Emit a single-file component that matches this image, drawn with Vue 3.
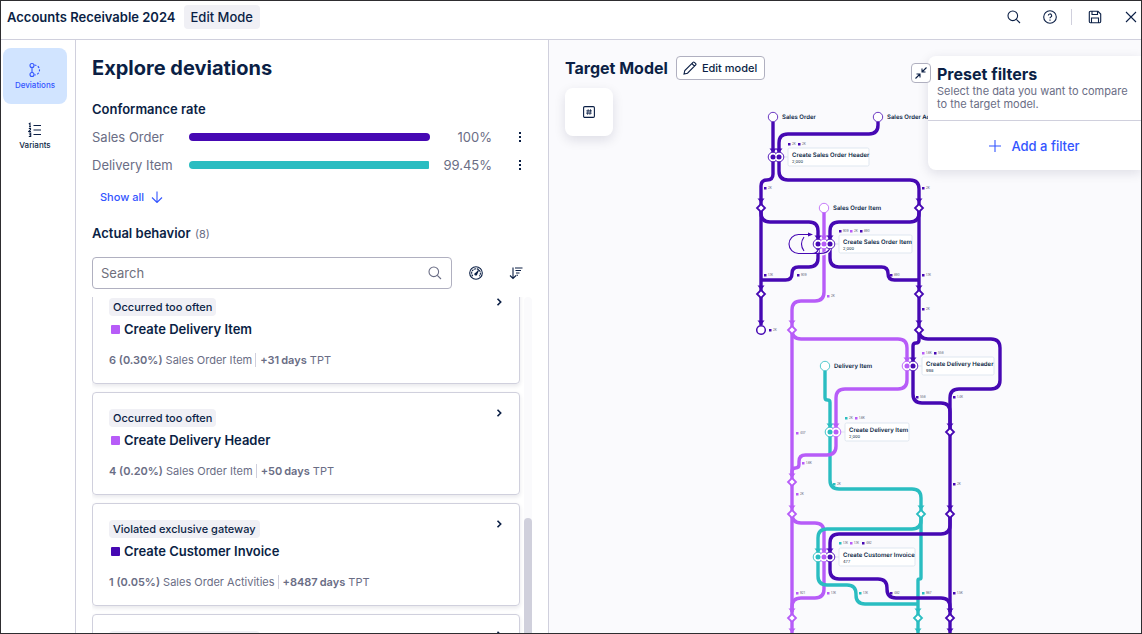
<script setup>
import { ref } from 'vue'

const DARK = '#4608b3'
const LIGHT = '#b75cf8'
const TEAL = '#2abdc1'

const query = ref('')

const rates = [
  { name: 'Sales Order', value: 100, label: '100%', color: DARK },
  { name: 'Delivery Item', value: 99.45, label: '99.45%', color: TEAL }
]

const deviations = [
  { kind: 'Occurred too often', title: 'Create Delivery Item', color: LIGHT, count: '6 (0.30%)', object: 'Sales Order Item', delta: '+31' },
  { kind: 'Occurred too often', title: 'Create Delivery Header', color: LIGHT, count: '4 (0.20%)', object: 'Sales Order Item', delta: '+50' },
  { kind: 'Violated exclusive gateway', title: 'Create Customer Invoice', color: DARK, count: '1 (0.05%)', object: 'Sales Order Activities', delta: '+8487' },
  { kind: 'Violated exclusive gateway', title: 'Clear Customer Invoice', color: DARK, count: '1 (0.05%)', object: 'Sales Order Activities', delta: '+8487' }
]

// Builds a path through the points with rounded corners.
function route(points, radius = 9) {
  let d = `M${points[0][0]} ${points[0][1]}`
  for (let i = 1; i < points.length - 1; i++) {
    const [px, py] = points[i - 1]
    const [x, y] = points[i]
    const [nx, ny] = points[i + 1]
    const before = Math.hypot(x - px, y - py)
    const after = Math.hypot(nx - x, ny - y)
    const r = Math.min(radius, before / (i === 1 ? 1 : 2), after / (i === points.length - 2 ? 1 : 2))
    const ax = x + ((px - x) / before) * r
    const ay = y + ((py - y) / before) * r
    const bx = x + ((nx - x) / after) * r
    const by = y + ((ny - y) / after) * r
    d += ` L${ax} ${ay} Q${x} ${y} ${bx} ${by}`
  }
  const end = points[points.length - 1]
  return `${d} L${end[0]} ${end[1]}`
}

const edges = [
  { c: DARK, p: [[773, 122], [773, 157]] },
  { c: DARK, p: [[878, 122], [878, 134], [779, 134], [779, 157]] },
  { c: DARK, p: [[773, 157], [773, 180], [761, 180], [761, 207]] },
  { c: DARK, p: [[779, 157], [779, 180], [919, 180], [919, 207]] },
  { c: DARK, p: [[761, 207], [761, 325]] },
  { c: DARK, p: [[761, 207], [761, 222], [818, 222], [818, 244]] },
  { c: DARK, p: [[919, 207], [919, 222], [830, 222], [830, 244]] },
  { c: DARK, p: [[919, 207], [919, 330]] },
  { c: DARK, p: [[818, 244], [818, 267], [792, 267], [792, 280], [761, 280]] },
  { c: DARK, p: [[830, 244], [830, 267], [888, 267], [888, 280], [919, 280]] },
  { c: LIGHT, p: [[824, 212], [824, 301], [792, 301], [792, 330]] },
  { c: TEAL, p: [[825, 371], [825, 400], [830, 400], [830, 432]] },
  { c: TEAL, p: [[830, 432], [830, 489], [921, 489], [921, 514]] },
  { c: LIGHT, p: [[792, 330], [792, 634]] },
  { c: LIGHT, p: [[792, 330], [792, 339], [907, 339], [907, 366]] },
  { c: LIGHT, p: [[907, 366], [907, 389], [836, 389], [836, 432]] },
  { c: LIGHT, p: [[836, 432], [836, 455], [799, 455], [799, 468], [792, 468], [792, 476]] },
  { c: DARK, p: [[919, 330], [919, 339], [1000, 339], [1000, 389], [950, 389], [950, 432]] },
  { c: DARK, p: [[919, 330], [919, 343], [913, 343], [913, 366]] },
  { c: DARK, p: [[913, 366], [913, 403], [950, 403], [950, 432]] },
  { c: LIGHT, p: [[792, 514], [792, 523], [824, 523], [824, 557]] },
  { c: LIGHT, p: [[824, 557], [824, 598], [792, 598], [792, 612]] },
  { c: TEAL, p: [[921, 514], [921, 529], [818, 529], [818, 557]] },
  { c: TEAL, p: [[921, 514], [921, 579], [918, 579], [918, 634]] },
  { c: TEAL, p: [[818, 557], [818, 585], [856, 585], [856, 604], [918, 604]] },
  { c: DARK, p: [[950, 432], [950, 634]] },
  { c: DARK, p: [[950, 514], [950, 534], [830, 534], [830, 557]] },
  { c: DARK, p: [[830, 557], [830, 579], [887, 579], [887, 598], [950, 598], [950, 612]] }
]

const arrows = [
  [773, 151, DARK], [779, 151, DARK], [761, 201, DARK], [919, 201, DARK],
  [818, 238, DARK], [824, 238, LIGHT], [830, 238, DARK],
  [761, 288, DARK], [919, 288, DARK], [761, 323, DARK], [919, 323, DARK], [792, 323, LIGHT],
  [907, 360, LIGHT], [913, 360, DARK], [830, 426, TEAL], [836, 426, LIGHT], [950, 426, DARK],
  [792, 476, LIGHT], [792, 508, LIGHT], [921, 508, TEAL], [950, 508, DARK],
  [818, 551, TEAL], [824, 551, LIGHT], [830, 551, DARK],
  [792, 611, LIGHT], [918, 611, TEAL], [950, 611, DARK],
  [792, 631, LIGHT], [918, 631, TEAL], [950, 631, DARK]
]

const gateways = [
  [761, 208, DARK], [919, 208, DARK], [761, 294, DARK], [919, 294, DARK], [919, 330, DARK],
  [792, 330, LIGHT], [950, 432, DARK], [792, 482, LIGHT], [792, 514, LIGHT], [921, 514, TEAL],
  [950, 514, DARK], [792, 618, LIGHT], [918, 618, TEAL], [950, 618, DARK]
]

const starts = [
  { x: 773, y: 117, c: DARK, label: 'Sales Order' },
  { x: 878, y: 117, c: DARK, label: 'Sales Order Activities' },
  { x: 824, y: 208, c: LIGHT, label: 'Sales Order Item' },
  { x: 825, y: 366, c: TEAL, label: 'Delivery Item' }
]

const activities = [
  { y: 157, dots: [[773, DARK], [779, DARK]], x: 788, w: 81, name: 'Create Sales Order Header', count: '2,000' },
  { y: 244, dots: [[818, DARK], [824, LIGHT], [830, DARK]], x: 839, w: 73, name: 'Create Sales Order Item', count: '2,000' },
  { y: 366, dots: [[907, LIGHT], [913, DARK]], x: 922, w: 72, name: 'Create Delivery Header', count: '998' },
  { y: 432, dots: [[830, TEAL], [836, LIGHT]], x: 845, w: 64, name: 'Create Delivery Item', count: '2,000' },
  { y: 557, dots: [[818, TEAL], [824, LIGHT], [830, DARK]], x: 839, w: 76, name: 'Create Customer Invoice', count: '477' }
]

const counts = [
  [789, 144, DARK, '2K'], [799, 144, DARK, '2K'], [765, 188, DARK, '2K'], [923, 188, DARK, '2K'],
  [840, 231, DARK, '909'], [851, 231, LIGHT, '2K'], [861, 231, DARK, '890'],
  [765, 275, DARK, '1.1K'], [798, 275, DARK, '909'], [891, 275, DARK, '890'], [923, 275, DARK, '1.1K'],
  [828, 296, LIGHT, '2K'], [770, 330, DARK, '2K'], [923, 309, DARK, '2K'],
  [923, 353, LIGHT, '1.6K'], [935, 353, DARK, '558'], [917, 397, DARK, '558'], [954, 397, DARK, '1.4K'],
  [846, 418, TEAL, '2K'], [856, 418, LIGHT, '1.6K'], [797, 433, LIGHT, '407'], [803, 463, LIGHT, '1.6K'],
  [834, 484, TEAL, '2K'], [797, 494, LIGHT, '2K'], [954, 484, DARK, '2K'],
  [840, 543, TEAL, '1.1K'], [851, 543, LIGHT, '1.1K'], [863, 543, DARK, '482'],
  [797, 593, LIGHT, '921'], [828, 593, LIGHT, '1.1K'], [860, 593, TEAL, '1.1K'],
  [891, 593, DARK, '482'], [923, 593, TEAL, '967'], [954, 593, DARK, '1.5K']
]
</script>

<template>
  <div class="app">
    <header class="topbar">
      <h1 class="topbar-title">Accounts Receivable 2024</h1>
      <span class="mode">Edit Mode</span>
      <div class="topbar-actions">
        <button class="icon-btn" aria-label="Search">
          <svg width="14" height="14" viewBox="0 0 14 14"><circle cx="5.8" cy="5.8" r="4.8" /><path d="M9.3 9.3 13 13" /></svg>
        </button>
        <button class="icon-btn" aria-label="Help">
          <svg width="14" height="14" viewBox="0 0 14 14"><circle cx="7" cy="7" r="6.3" /><path d="M5.3 5.6a1.7 1.7 0 1 1 2.5 1.5c-.6.3-.8.6-.8 1.2" /><path d="M7 9.6v1.2" /></svg>
        </button>
        <span class="divider"></span>
        <button class="icon-btn" aria-label="Save">
          <svg width="14" height="14" viewBox="0 0 14 14"><path d="M1.3 2.4v9.2q0 1.1 1.1 1.1h9.2q1.1 0 1.1-1.1V4L10 1.300H2.400q-1.100 0-1.100 1.100zM4 1.500v3h5.500v-3M3.500 12.500V8h7v4.500" /></svg>
        </button>
        <button class="icon-btn" aria-label="Close">
          <svg width="14" height="14" viewBox="0 0 14 14"><path d="m2 2 10 10M12 2 2 12" /></svg>
        </button>
      </div>
    </header>

    <div class="body">
      <nav class="rail">
        <button class="rail-item active">
          <svg width="14" height="16" viewBox="0 0 14 16"><circle cx="4" cy="3.500" r="2" /><circle cx="4" cy="12.500" r="2" /><path d="M4 5.500v5" /><path d="M6.500 3a5 5 0 0 1 0 10" stroke-dasharray="2 1.500" /></svg>
          Deviations
        </button>
        <button class="rail-item">
          <svg width="14" height="16" viewBox="0 0 14 16"><path d="M5.500 3.500H13M5.500 8H13M5.500 12.500H13" /><path d="M.8 2 2 1.300v3.500M1 4.800h2M.8 6.500H2.500v1L.8 9.500H3M.8 11H2.700v3.500H.8M1.200 12.700h1.500" /></svg>
          Variants
        </button>
      </nav>

      <section class="explore">
        <h2 class="explore-title">Explore deviations</h2>
        <h3 class="sub-title">Conformance rate</h3>
        <div class="rates">
          <div v-for="r in rates" :key="r.name" class="rate">
            <span class="rate-name">{{ r.name }}</span>
            <div class="rate-track">
              <div class="rate-fill" :class="{ partial: r.value < 100 }" :style="{ width: r.value + '%', background: r.color }"></div>
            </div>
            <span class="rate-value">{{ r.label }}</span>
            <button class="icon-btn" :aria-label="r.name + ' options'">
              <svg class="solid" width="12" height="12" viewBox="0 0 12 12"><path d="M5 1h2v2H5zM5 5h2v2H5zM5 9h2v2H5z" /></svg>
            </button>
          </div>
        </div>
        <button class="show-all">
          Show all
          <svg width="12" height="12" viewBox="0 0 12 12"><path d="M6 .5v11M1 6.500l5 5 5-5" /></svg>
        </button>
        <h3 class="sub-title behavior">Actual behavior <span class="total">(8)</span></h3>
        <div class="tools">
          <label class="search">
            <input v-model="query" type="text" placeholder="Search" aria-label="Search" />
            <svg width="14" height="14" viewBox="0 0 14 14"><circle cx="5.800" cy="5.800" r="4.800" /><path d="M9.300 9.300 13 13" /></svg>
          </label>
          <button class="icon-btn" aria-label="Effect">
            <svg width="14" height="14" viewBox="0 0 14 14"><circle cx="7" cy="7" r="6.300" /><path d="M3.800 10.200a4.400 4.400 0 1 1 6.400 0" stroke-dasharray="2 .7" /><path d="M6.300 8.200 9.500 4.300 7.500 8.600z" /><circle cx="6.800" cy="8.200" r=".8" /></svg>
          </button>
          <button class="icon-btn" aria-label="Sort">
            <svg width="14" height="14" viewBox="0 0 14 14"><path d="M4 1.500v11M1 9.500l3 3 3-3M6 2h7.500M6.500 4.500H12M7 7h3.500M7.500 9.200H9" /></svg>
          </button>
        </div>
        <div class="list-area">
          <div class="list">
            <article v-for="d in deviations" :key="d.title" class="card">
              <div class="card-text">
                <span class="tag">{{ d.kind }}</span>
                <h4 class="card-title"><i class="swatch" :style="{ background: d.color }"></i>{{ d.title }}</h4>
                <div class="meta">
                  <span><b>{{ d.count }}</b> {{ d.object }}</span>
                  <span class="meta-effect"><b class="delta"><span>{{ d.delta }}</span><span>days</span></b> TPT</span>
                </div>
              </div>
              <button class="open" :aria-label="'Open ' + d.title">
                <svg width="8" height="8" viewBox="0 0 8 8"><path d="M2.500.8 5.700 4 2.500 7.200" /></svg>
              </button>
            </article>
          </div>
          <div class="scroll-track"><div class="scroll-thumb"></div></div>
        </div>
      </section>

      <main class="model">
        <svg class="diagram" width="593" height="594" viewBox="549 40 593 594" role="img" aria-label="Target model">
          <path v-for="(e, i) in edges" :key="'e' + i" class="edge" :d="route(e.p)" :stroke="e.c" />
          <path v-for="(a, i) in arrows" :key="'a' + i" :d="`M${a[0] - 3.5} ${a[1] - 2.500}h7l-3.500 4.500z`" :fill="a[2]" />
          <g class="loop">
            <path class="halo" d="M818 250q-1 3.500-6 3.500H798.500a9.500 9.500 0 0 1 0-19H811M830 248q-2 6-10 6" />
            <path d="M818 250q-1 3.500-6 3.500H798.500a9.500 9.500 0 0 1 0-19H811M804 251q-5-7 0-14M830 248q-2 5.500-10 5.500H812" />
            <path class="loop-head" d="M808 232.500l5 2-5 2z" />
          </g>
          <path v-for="(g, i) in gateways" :key="'g' + i" class="gateway" :d="`M${g[0]} ${g[1] - 4}l4 4-4 4-4-4z`" :stroke="g[2]" />
          <g v-for="s in starts" :key="s.label">
            <circle class="start" :cx="s.x" :cy="s.y" r="4.700" :stroke="s.c" />
            <text class="node-name" :x="s.x + 9" :y="s.y + 2">{{ s.label }}</text>
          </g>
          <circle class="end" cx="761" cy="330" r="4.300" />
          <g v-for="a in activities" :key="a.name">
            <path class="link" :d="`M${a.dots[a.dots.length - 1][0]} ${a.y}H${a.x}`" />
            <circle v-for="(d, i) in a.dots" :key="'r' + i" class="ring" :cx="d[0]" :cy="a.y" r="4.800" :stroke="d[1]" />
            <circle v-for="(d, i) in a.dots" :key="'c' + i" class="core" :cx="d[0]" :cy="a.y" r="3.600" />
            <circle v-for="(d, i) in a.dots" :key="'d' + i" :cx="d[0]" :cy="a.y" r="2.500" :fill="d[1]" />
            <rect class="node-card" :x="a.x" :y="a.y - 9" :width="a.w" height="18" rx="1.500" />
            <text class="node-name" :x="a.x + 4" :y="a.y">{{ a.name }}</text>
            <text class="node-count" :x="a.x + 4" :y="a.y + 6">{{ a.count }}</text>
          </g>
          <g v-for="(c, i) in counts" :key="'c' + i">
            <rect :x="c[0] - 1" :y="c[1] - 1" width="2.500" height="2.500" :fill="c[2]" />
            <text class="edge-count" :x="c[0] + 3" :y="c[1] + 1">{{ c[3] }}</text>
          </g>
        </svg>

        <div class="model-head">
          <h2 class="model-title">Target Model</h2>
          <button class="edit">
            <svg width="14" height="14" viewBox="0 0 14 14"><path d="M1 13l.8-3.500L10 1.300q.7-.6 1.400 0l1.300 1.300q.6.700 0 1.400L4.500 12.200zM8.800 2.500l2.700 2.700" /></svg>
            Edit model
          </button>
        </div>
        <button class="kpi" aria-label="Show numbers">
          <svg width="12" height="12" viewBox="0 0 12 12"><rect x=".6" y=".6" width="10.800" height="10.800" rx="1.200" /><path stroke-width=".9" d="M5.200 3.300 4.600 8.700M7.500 3.300 6.900 8.700M3.300 4.900h5.600M3.100 7.100h5.600" /></svg>
        </button>

        <aside class="filters">
          <button class="collapse" aria-label="Collapse filters">
            <svg width="12" height="12" viewBox="0 0 12 12"><path d="M11.500.5 7 5M7 1.500V5h3.500M.5 11.500 5 7M1.500 7H5v3.500" /></svg>
          </button>
          <div class="filters-head">
            <h2 class="filters-title">Preset filters</h2>
            <p class="filters-text">Select the data you want to compare to the target model.</p>
          </div>
          <button class="add">
            <svg width="12" height="12" viewBox="0 0 12 12"><path d="M6 0v12M0 6h12" /></svg>
            Add a filter
          </button>
        </aside>
      </main>
    </div>
  </div>
</template>

<style>
body {
  margin: 0;
}
</style>

<style scoped>
.app {
  box-sizing: border-box;
  height: 100vh;
  display: flex;
  flex-direction: column;
  overflow: hidden;
  border: 1px solid #2e2d30;
  background: #fff;
  color: #0b1f45;
  font-family: Inter, "Liberation Sans", sans-serif;
  font-size: 13px;
}
.app *,
.app *::before {
  box-sizing: border-box;
}
h1, h2, h3, h4, p {
  margin: 0;
}
button {
  font: inherit;
  color: inherit;
  background: none;
  border: 0;
  padding: 0;
  cursor: pointer;
}
svg {
  flex: none;
  fill: none;
  stroke: currentColor;
  stroke-width: 1.1;
}
svg.solid {
  fill: currentColor;
  stroke: none;
}
.icon-btn {
  display: flex;
  align-items: center;
  justify-content: center;
  width: 24px;
  height: 24px;
}
.topbar {
  flex: none;
  display: flex;
  align-items: center;
  gap: 8px;
  height: 39px;
  padding: 0 0 6px 6px;
  border-bottom: 1px solid #d0d0dd;
}
.topbar-title {
  font-size: 13px;
  font-weight: 600;
}
.mode {
  height: 24px;
  padding: 0 7px;
  border-radius: 4px;
  background: #f0f0f5;
  font-size: 13px;
  line-height: 24px;
  font-weight: 500;
}
.topbar-actions {
  display: flex;
  align-items: center;
  gap: 12px;
  margin-left: auto;
}
.divider {
  width: 1px;
  height: 16px;
  margin: 0 -1px 0 -3px;
  background: #d0d0dd;
}
.topbar-actions .icon-btn:last-child {
  margin-right: -2px;
}
.body {
  flex: 1;
  display: flex;
  min-height: 0;
}
.rail {
  flex: none;
  display: flex;
  flex-direction: column;
  gap: 4px;
  width: 75px;
  padding: 8px 8px 0 2px;
  border-right: 1px solid #d0d0dd;
}
.rail-item {
  display: flex;
  flex-direction: column;
  align-items: center;
  justify-content: center;
  gap: 2px;
  height: 56px;
  padding-bottom: 1px;
  border-radius: 8px;
  font-size: 8px;
  line-height: 10px;
  font-weight: 500;
}
.rail-item.active {
  background: #d1e4ff;
  color: #3355ff;
}
.explore {
  flex: none;
  display: flex;
  flex-direction: column;
  width: 473px;
  padding: 16px 16px 0;
  border-right: 1px solid #d0d0dd;
}
.explore-title {
  font-size: 20px;
  line-height: 24px;
  font-weight: 700;
}
.sub-title {
  margin-top: 19px;
  font-size: 13px;
  line-height: 20px;
  font-weight: 600;
}
.rates {
  margin-top: 4px;
}
.rate {
  display: flex;
  align-items: center;
  height: 28px;
  color: #6a6d85;
}
.rate-name {
  width: 97px;
}
.rate-track {
  flex: 1;
}
.rate-fill {
  height: 8px;
  border-radius: 4px;
}
.rate-fill.partial {
  border-radius: 4px 1px 1px 4px;
}
.rate-value {
  width: 62px;
  text-align: right;
}
.rate .icon-btn {
  margin-left: 16px;
  color: #0b1f45;
}
.show-all {
  display: flex;
  align-items: center;
  gap: 7px;
  align-self: flex-start;
  height: 24px;
  margin: 6px 0 0 8px;
  color: #3355ff;
  font-size: 11px;
  font-weight: 500;
}
.sub-title.behavior {
  margin-top: 14px;
}
.total {
  margin-left: 1px;
  color: #6a6d85;
  font-size: 11px;
  font-weight: 400;
}
.tools {
  display: flex;
  align-items: center;
  gap: 16px;
  margin-top: 13px;
}
.tools .icon-btn:first-of-type {
  margin-left: -4px;
}
.search {
  display: flex;
  align-items: center;
  width: 360px;
  height: 32px;
  padding: 0 9px 0 8px;
  border: 1px solid #b0b0c0;
  border-radius: 4px;
  color: #6a6d85;
}
.search input {
  flex: 1;
  min-width: 0;
  padding: 0;
  border: 0;
  outline: 0;
  background: none;
  font: inherit;
  color: #0b1f45;
}
.search input::placeholder {
  color: #6f6f7c;
}
.list-area {
  flex: 1;
  display: flex;
  gap: 4px;
  min-height: 0;
  margin-top: 8px;
  overflow: hidden;
}
.list {
  flex: 1;
  display: flex;
  flex-direction: column;
  gap: 8px;
  margin: -16px 0 0;
}
.card {
  flex: none;
  display: flex;
  justify-content: space-between;
  height: 103px;
  padding: 16px;
  border: 1px solid #d0d0dd;
  border-radius: 4px;
  box-shadow: 0 2px 4px rgba(20, 20, 60, 0.1);
}
.tag {
  display: inline-block;
  height: 18px;
  padding: 0 4px;
  border-radius: 4px;
  background: #f0f0f5;
  font-size: 11px;
  line-height: 18px;
  font-weight: 500;
}
.card-title {
  display: flex;
  align-items: center;
  gap: 4px;
  margin: 3px 0 0 2px;
  font-size: 13px;
  line-height: 20px;
  font-weight: 600;
}
.swatch {
  width: 9px;
  height: 9px;
  border-radius: 1px;
}
.meta {
  display: flex;
  margin-top: 14px;
  color: #6a6d85;
  font-size: 11px;
  line-height: 14px;
}
.meta b {
  font-weight: 600;
}
.meta-effect {
  margin-left: 3px;
  padding-left: 4px;
  border-left: 1px solid #d0d0dd;
}
.delta {
  display: inline-flex;
  gap: 2px;
}
.open {
  width: 8px;
  height: 8px;
  display: flex;
}
.open svg {
  stroke-width: 1.6;
}
.scroll-track {
  width: 8px;
  border-radius: 4px 4px 0 0;
  background: #fafafc;
}
.scroll-thumb {
  height: 100%;
  margin-top: 221px;
  border-radius: 4px 4px 0 0;
  background: #d0d0dc;
}
.model {
  flex: 1;
  position: relative;
  min-width: 0;
  padding: 16px 16px 0;
  overflow: hidden;
  background: #fafafd;
}
.diagram {
  position: absolute;
  left: 0;
  top: 0;
  stroke: none;
}
.edge {
  fill: none;
  stroke-width: 3.4;
}
.loop {
  fill: none;
  stroke: #4608b3;
  stroke-width: 1.1;
}
.loop .halo {
  stroke: #fafafd;
  stroke-width: 3;
}
.loop .loop-head {
  fill: #4608b3;
  stroke: none;
}
.gateway {
  fill: #fff;
  stroke-width: 1.8;
}
.start {
  fill: #fff;
  stroke-width: 0.8;
}
.end {
  fill: #fff;
  stroke: #4608b3;
  stroke-width: 1.5;
}
.link {
  stroke: #dfe5f0;
  stroke-width: 1;
}
.ring {
  fill: #fff;
  stroke-width: 0.9;
}
.core {
  fill: #fff;
}
.node-card {
  fill: #fff;
  stroke: #dfe7f0;
  stroke-width: 1;
}
.node-name {
  fill: #0b1f45;
  font-size: 6px;
  font-weight: 600;
  text-rendering: geometricPrecision;
}
.node-count {
  fill: #0b1f45;
  font-size: 4px;
}
.edge-count {
  fill: #55586e;
  font-size: 3px;
}
.model-head {
  position: relative;
  display: flex;
  align-items: center;
  gap: 8px;
}
.model-title {
  font-size: 16px;
  line-height: 24px;
  font-weight: 700;
}
.edit {
  display: flex;
  align-items: center;
  gap: 5px;
  height: 24px;
  padding: 0 7px 0 6px;
  border: 1px solid #b0b0c0;
  border-radius: 4px;
  background: #fff;
  font-size: 11px;
  font-weight: 500;
}
.kpi {
  position: relative;
  display: flex;
  align-items: center;
  justify-content: center;
  width: 48px;
  height: 48px;
  margin-top: 8px;
  border-radius: 8px;
  background: #fff;
  box-shadow: 0 4px 12px rgba(20, 20, 60, 0.12);
}
.filters {
  position: absolute;
  top: 16px;
  right: 0;
  width: 213px;
  border-radius: 8px 0 0 8px;
  background: #fff;
  box-shadow: 0 3px 12px rgba(20, 20, 60, 0.12);
}
.collapse {
  position: absolute;
  left: -17px;
  top: 7px;
  display: flex;
  align-items: center;
  justify-content: center;
  width: 20px;
  height: 20px;
  border: 1px solid #b0b0c0;
  border-radius: 4px;
  background: #fff;
}
.filters-head {
  padding: 8px 9px 9px;
  border-bottom: 1px solid #d0d0dd;
}
.filters-title {
  font-size: 16px;
  line-height: 21px;
  font-weight: 700;
}
.filters-text {
  color: #6a6d85;
  font-size: 11px;
  line-height: 13px;
}
.add {
  display: flex;
  align-items: center;
  justify-content: center;
  gap: 10px;
  width: 100%;
  height: 49px;
  color: #3355ff;
  font-size: 13px;
  font-weight: 500;
}
</style>
